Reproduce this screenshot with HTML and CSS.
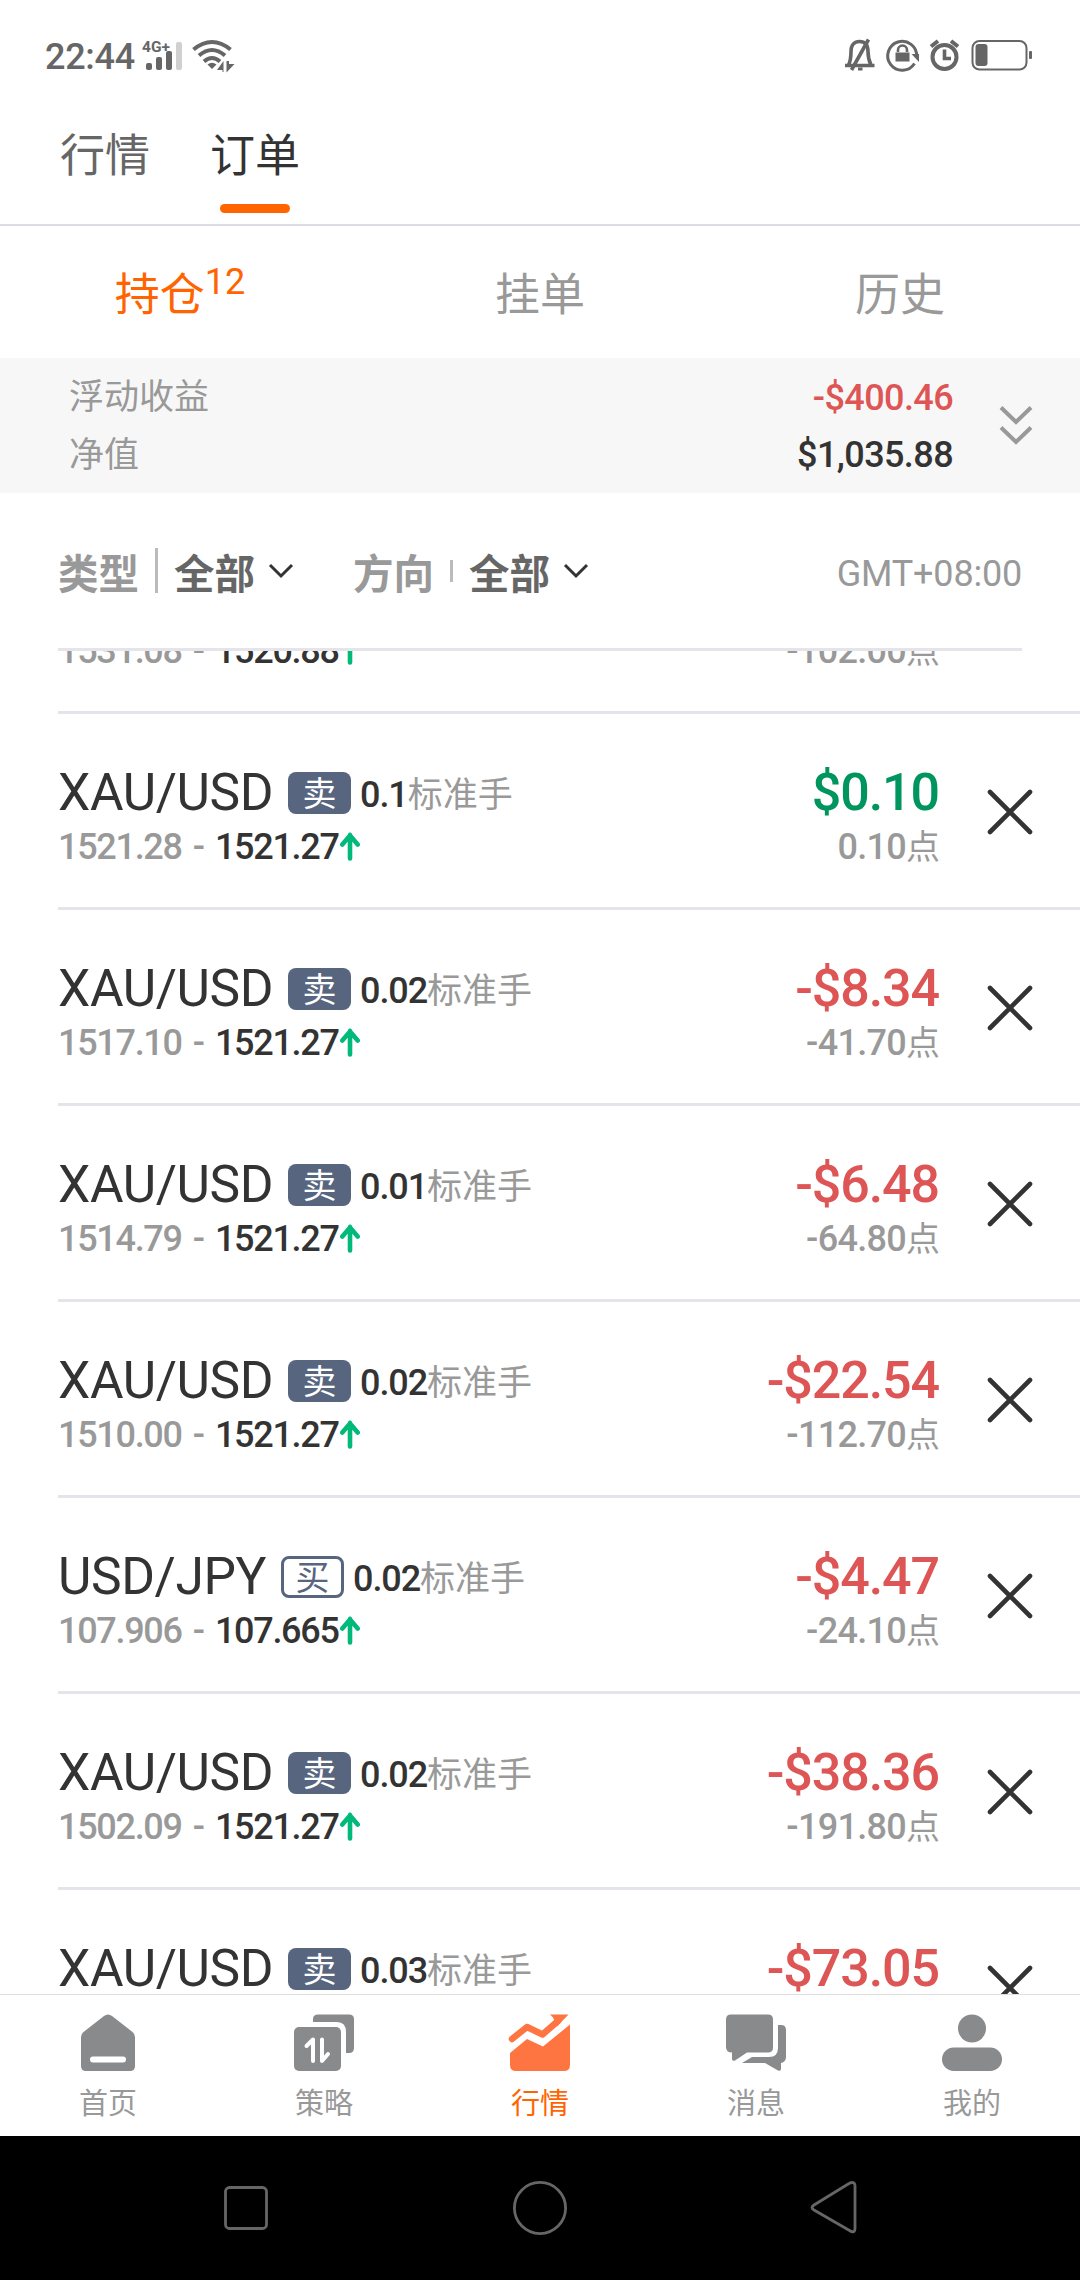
FILE: index.html
```html
<!DOCTYPE html>
<html lang="zh-CN">
<head>
<meta charset="utf-8">
<title>订单</title>
<link rel="stylesheet" href="styles.css">
</head>
<body>
<svg class="defs" width="0" height="0">
  <symbol id="up" viewBox="0 0 20 30"><path d="M10 27.500V4M2.300 13.500L10 4.500L17.700 13.500" fill="none" stroke="#00b97a" stroke-width="4.600" stroke-linecap="round" stroke-linejoin="miter"/></symbol>
  <symbol id="close" viewBox="0 0 46 46"><path d="M3 3L43 43M43 3L3 43" fill="none" stroke="#333" stroke-width="4.600" stroke-linecap="round"/></symbol>
  <symbol id="down" viewBox="0 0 26 16"><path d="M2 2L13 13L24 2" fill="none" stroke="#333" stroke-width="3"/></symbol>
</svg>
<div class="phone">
  <header class="status">
    <span class="clock">22:44</span>
    <svg class="signal" width="42" height="34" viewBox="0 0 42 34">
      <text x="0" y="13" class="net">4G+</text>
      <rect x="4" y="24" width="6" height="7" rx="2" fill="#666"/>
      <rect x="14" y="18" width="6" height="13" rx="2" fill="#666"/>
      <rect x="24" y="12" width="6" height="19" rx="2" fill="#666"/>
      <rect x="34" y="3" width="6" height="28" rx="2" fill="#d0d0d0"/>
    </svg>
    <svg class="wifi" width="44" height="34" viewBox="0 0 44 34">
      <g fill="none" stroke="#666" stroke-width="4">
        <path d="M1.500 10.500Q20 -4.500 38.500 10.500"/>
        <path d="M7 16.500Q20 5.500 33 16.500"/>
        <path d="M12 22.500Q20 15.500 28 22.500"/>
      </g>
      <path d="M15.500 25.500Q20 22 24.500 25.500L20 30Z" fill="#666"/>
      <path d="M25 31L31.500 22V33H30.500V31H25ZM34.500 22V33.500L42.500 25H37V22Z" fill="#666"/>
    </svg>
    <svg class="sysicons" width="188" height="38" viewBox="0 0 188 38">
      <g fill="none" stroke="#666">
        <path d="M1 29.500H30.500M4.500 29C7 24 7 21 7 15.500C7 8.500 10.500 5.500 15.500 5.500S24 8.500 24 15.500C24 21 24.500 24 27 29" stroke-width="3.600"/>
        <path d="M7.500 34L24.500 3.500" stroke-width="3.600"/>
        <path d="M14 33H18.500" stroke-width="3"/>
        <path d="M72.700 20.500A14.500 14.500 0 1 0 70.500 27.500" stroke-width="3"/>
        <path d="M54 16V14A4.500 4.500 0 0 1 63 14V16" stroke-width="2.600"/>
        <circle cx="100.500" cy="21" r="12" stroke-width="4"/>
        <path d="M87 10.500L94 5M107 5L114 10.500" stroke-width="4"/>
        <path d="M100.500 13.500V22.500H107" stroke-width="3.600"/>
        <rect x="128.500" y="5" width="54" height="28.500" rx="7" stroke-width="2"/>
      </g>
      <path d="M51.500 16.500H65.500V25.500H51.500ZM67.500 18H75V26Z" fill="#666"/>
      <rect x="131.500" y="8" width="12" height="22" rx="3" fill="#666"/>
      <rect x="185" y="15" width="3" height="8" rx="1" fill="#666"/>
    </svg>
  </header>

  <nav class="tabs">
    <span class="tab">行情</span>
    <span class="tab tab-on">订单</span>
  </nav>

  <nav class="subtabs">
    <span class="subtab subtab-on">持仓<span class="count">12</span></span>
    <span class="subtab">挂单</span>
    <span class="subtab">历史</span>
  </nav>

  <section class="summary">
    <div class="labels"><span>浮动收益</span><span>净值</span></div>
    <div class="values"><span class="red">-$400.46</span><span>$1,035.88</span></div>
    <svg class="more" width="34" height="40" viewBox="0 0 34 40"><path d="M2 2.500L17 17L32 2.500M2 22.500L17 37L32 22.500" fill="none" stroke="#999" stroke-width="4"/></svg>
  </section>

  <section class="filters">
    <span class="fname">类型</span><i class="bar bar-tall"></i><span class="fvalue">全部</span><svg class="caret" width="26" height="16"><use href="#down"/></svg>
    <span class="fname fname-2">方向</span><i class="bar"></i><span class="fvalue">全部</span><svg class="caret" width="26" height="16"><use href="#down"/></svg>
    <span class="zone">GMT+08:00</span>
  </section>

  <main class="list">
    <article class="row row-first">
      <div class="info"><div class="price"><span>1531.08 - </span><b>1520.88</b><svg class="up" width="20" height="30"><use href="#up"/></svg></div></div>
      <div class="profit"><span class="pts">-102.00<em>点</em></span></div>
    </article>
    <article class="row">
      <div class="info"><div class="head"><span class="pair">XAU/USD</span><span class="side">卖</span><span class="lot"><b>0.1</b>标准手</span></div>
      <div class="price"><span>1521.28 - </span><b>1521.27</b><svg class="up" width="20" height="30"><use href="#up"/></svg></div></div>
      <div class="profit"><span class="sum green">$0.10</span><span class="pts">0.10<em>点</em></span></div>
      <svg class="close" width="46" height="46"><use href="#close"/></svg>
    </article>
    <article class="row">
      <div class="info"><div class="head"><span class="pair">XAU/USD</span><span class="side">卖</span><span class="lot"><b>0.02</b>标准手</span></div>
      <div class="price"><span>1517.10 - </span><b>1521.27</b><svg class="up" width="20" height="30"><use href="#up"/></svg></div></div>
      <div class="profit"><span class="sum red">-$8.34</span><span class="pts">-41.70<em>点</em></span></div>
      <svg class="close" width="46" height="46"><use href="#close"/></svg>
    </article>
    <article class="row">
      <div class="info"><div class="head"><span class="pair">XAU/USD</span><span class="side">卖</span><span class="lot"><b>0.01</b>标准手</span></div>
      <div class="price"><span>1514.79 - </span><b>1521.27</b><svg class="up" width="20" height="30"><use href="#up"/></svg></div></div>
      <div class="profit"><span class="sum red">-$6.48</span><span class="pts">-64.80<em>点</em></span></div>
      <svg class="close" width="46" height="46"><use href="#close"/></svg>
    </article>
    <article class="row">
      <div class="info"><div class="head"><span class="pair">XAU/USD</span><span class="side">卖</span><span class="lot"><b>0.02</b>标准手</span></div>
      <div class="price"><span>1510.00 - </span><b>1521.27</b><svg class="up" width="20" height="30"><use href="#up"/></svg></div></div>
      <div class="profit"><span class="sum red">-$22.54</span><span class="pts">-112.70<em>点</em></span></div>
      <svg class="close" width="46" height="46"><use href="#close"/></svg>
    </article>
    <article class="row">
      <div class="info"><div class="head"><span class="pair">USD/JPY</span><span class="side side-buy">买</span><span class="lot"><b>0.02</b>标准手</span></div>
      <div class="price"><span>107.906 - </span><b>107.665</b><svg class="up" width="20" height="30"><use href="#up"/></svg></div></div>
      <div class="profit"><span class="sum red">-$4.47</span><span class="pts">-24.10<em>点</em></span></div>
      <svg class="close" width="46" height="46"><use href="#close"/></svg>
    </article>
    <article class="row">
      <div class="info"><div class="head"><span class="pair">XAU/USD</span><span class="side">卖</span><span class="lot"><b>0.02</b>标准手</span></div>
      <div class="price"><span>1502.09 - </span><b>1521.27</b><svg class="up" width="20" height="30"><use href="#up"/></svg></div></div>
      <div class="profit"><span class="sum red">-$38.36</span><span class="pts">-191.80<em>点</em></span></div>
      <svg class="close" width="46" height="46"><use href="#close"/></svg>
    </article>
    <article class="row">
      <div class="info"><div class="head"><span class="pair">XAU/USD</span><span class="side">卖</span><span class="lot"><b>0.03</b>标准手</span></div></div>
      <div class="profit"><span class="sum red">-$73.05</span></div>
      <svg class="close" width="46" height="46"><use href="#close"/></svg>
    </article>
  </main>

  <nav class="dock">
    <a class="item"><svg width="62" height="58" viewBox="0 0 62 58"><path d="M4 23Q4 20 6.500 18L27 2Q31 -1 35 2L55.500 18Q58 20 58 23V52Q58 57 53 57H9Q4 57 4 52Z" fill="#898a8c"/><rect x="13" y="42.500" width="36" height="6" rx="3" fill="#fff"/></svg><span>首页</span></a>
    <a class="item"><svg width="62" height="58" viewBox="0 0 62 58"><path d="M20 8V5Q20 .5 25 .5H56Q61 .5 61 5V34Q61 39 56 39H53V18Q53 8 44 8Z" fill="#898a8c"/><rect x="1" y="13" width="47" height="44" rx="5" fill="#898a8c"/><path d="M13.500 32L20 25.500V47M29 25.500V47L35 40" fill="none" stroke="#fff" stroke-width="4" stroke-linecap="round" stroke-linejoin="round"/></svg><span>策略</span></a>
    <a class="item item-on"><svg width="62" height="58" viewBox="0 0 62 58"><path d="M1 39L18 25L34 32.500L61 10.500V51Q61 57 55 57H7Q1 57 1 51Z" fill="#ff7542"/><path d="M3 25L18 13L33.500 20.500L49 7" fill="none" stroke="#ff7542" stroke-width="6.500" stroke-linecap="round" stroke-linejoin="round"/><path d="M41 .5H59.500L48 12.500L44 3.500Z" fill="#ff7542"/></svg><span>行情</span></a>
    <a class="item"><svg width="62" height="58" viewBox="0 0 62 58"><path d="M6 .5H43Q48 .5 48 5.500V33.500Q48 38.500 43 38.500H22L10 46.500Q7 47.500 7 45V38.500Q1 38.500 1 33V5.500Q1 .5 6 .5Z" fill="#898a8c"/><path d="M53 11H56Q61 11 61 16V43Q61 48 56 49V55Q56 57.500 53 56.500L40 49H17L27 43H44Q53 43 53 34Z" fill="#898a8c"/></svg><span>消息</span></a>
    <a class="item"><svg width="62" height="58" viewBox="0 0 62 58"><circle cx="31" cy="14.500" r="14" fill="#898a8c"/><rect x="1" y="33.500" width="60" height="23.500" rx="11.750" fill="#898a8c"/></svg><span>我的</span></a>
  </nav>

  <footer class="system">
    <svg width="58" height="58" viewBox="0 0 58 58"><rect x="8.500" y="8.500" width="41" height="41" rx="4" fill="none" stroke="#666" stroke-width="2.800"/></svg>
    <svg width="58" height="58" viewBox="0 0 58 58"><circle cx="29" cy="29" r="25.600" fill="none" stroke="#666" stroke-width="2.800"/></svg>
    <svg width="58" height="58" viewBox="0 0 58 58"><path d="M9 26L44 4.500Q50 1.500 50 7.500V49Q50 55 44.500 51.500L9 31Q5 28.500 9 26Z" fill="none" stroke="#666" stroke-width="2.800"/></svg>
  </footer>
</div>
</body>
</html>
```
FILE: styles.css
```css
* { box-sizing: border-box; }
body {
  margin: 0;
  background: #fff;
  color: #333;
  font-family: Roboto, "Noto Sans CJK SC", sans-serif;
}
svg { display: block; flex: none; overflow: visible; }
.defs { position: absolute; }
.phone {
  width: 1080px;
  height: 2280px;
  display: flex;
  flex-direction: column;
  overflow: hidden;
  white-space: nowrap;
}

.status {
  height: 110px;
  flex: none;
  display: flex;
  align-items: center;
  padding: 0 48px 0 45px;
}
.clock {
  width: 97px;
  font-size: 36px;
  line-height: 44px;
  font-weight: 500;
  color: #666;
  letter-spacing: -0.300px;
  margin-top: 3px;
}
.signal { margin-top: 1px; }
.net { font: 700 15.500px Roboto, sans-serif; fill: #666; }
.wifi { margin: 2px 0 0 8px; }
.sysicons { margin-left: auto; }

.tabs {
  height: 116px;
  flex: none;
  display: flex;
  gap: 60px;
  padding: 17px 0 0 60px;
  border-bottom: 2px solid #dcdce4;
}
.tab {
  display: flex;
  flex-direction: column;
  align-items: center;
  font-size: 45px;
  line-height: 60px;
  color: #666;
}
.tab-on { color: #333; }
.tab-on::after {
  content: "";
  width: 70px;
  height: 9px;
  margin-top: 17px;
  border-radius: 5px;
  background: #ff6400;
}

.subtabs {
  height: 132px;
  flex: none;
  display: grid;
  grid-template-columns: repeat(3, 1fr);
  align-items: center;
  padding-top: 7px;
}
.subtab {
  display: flex;
  justify-content: center;
  font-size: 45px;
  line-height: 60px;
  color: #999;
}
.subtab-on { color: #ff6400; }
.count { font-size: 36px; line-height: 40px; margin-top: -4px; }

.summary {
  height: 135px;
  flex: none;
  display: flex;
  align-items: center;
  padding: 2px 47px 0 69px;
  background: #f7f7f7;
  font-size: 35px;
}
.labels, .values { display: flex; flex-direction: column; line-height: 58px; }
.labels { color: #999; }
.values {
  margin-left: auto;
  text-align: right;
  font-size: 36px;
  font-weight: 500;
  letter-spacing: -0.600px;
  line-height: 57px;
}
.more { margin: -4px 0 0 46px; }
.red { color: #dd5555; }
.green { color: #00955f; }

.filters {
  height: 158px;
  flex: none;
  display: flex;
  align-items: center;
  margin: 0 58px;
  padding-top: 2px;
  border-bottom: 3px solid #e4e4ea;
  font-size: 40.500px;
  font-weight: 700;
}
.fname { color: #999; }
.fname-2 { margin-left: 59px; }
.fvalue { color: #666; }
.bar { width: 3px; height: 22px; margin: -2px 16px 0 16px; background: #bbb; }
.bar-tall { height: 45px; }
.caret { margin: -2px 0 0 13px; }
.zone { margin: 5px 0 0 auto; font-size: 36px; font-weight: 400; letter-spacing: -0.200px; color: #999; }

.list { flex: 1; overflow: hidden; min-height: 0; }
.row {
  height: 196px;
  display: flex;
  margin-left: 58px;
  padding: 48px 47px 0 0;
  border-bottom: 3px solid #e4e4ea;
}
.row-first { height: 85px; margin-top: -22px; padding: 0 140px 0 0; }
.head { display: flex; align-items: flex-start; height: 63px; }
.pair { margin-top: 1px; font-size: 51.500px; line-height: 60px; letter-spacing: -0.400px; }
.side {
  width: 63px;
  height: 42px;
  margin: 10px 9px 0 15px;
  border-radius: 8px;
  background: #57657f;
  color: #fff;
  font-size: 34px;
  line-height: 44px;
  text-align: center;
}
.side-buy { background: #fff; border: 3px solid #57657f; color: #57657f; line-height: 38px; }
.lot { margin-top: 11px; font-size: 35px; line-height: 44px; color: #999; }
.lot b, .price { font-size: 36px; font-weight: 500; letter-spacing: -1.300px; }
.lot b { letter-spacing: -1.100px; }
.lot b, .price b { color: #333; font-weight: 500; }
.price { display: flex; line-height: 44px; color: #999; white-space: pre; word-spacing: 3.500px; }
.up { margin: 6px 0 0 1px; }
.profit { margin-left: auto; display: flex; flex-direction: column; text-align: right; }
.sum { margin: 1px 1px 0 0; font-size: 52px; line-height: 60px; height: 62px; font-weight: 500; letter-spacing: -1.100px; }
.pts { font-size: 36px; line-height: 44px; font-weight: 500; letter-spacing: -0.700px; color: #999; }
.pts em { font-style: normal; font-weight: 400; font-size: 34px; letter-spacing: 0; }
.close { margin: 27px 0 0 47px; }

.dock {
  height: 142px;
  flex: none;
  display: grid;
  grid-template-columns: repeat(5, 1fr);
  border-top: 1px solid #e0e0e0;
}
.item {
  display: flex;
  flex-direction: column;
  align-items: center;
  gap: 12px;
  padding-top: 19px;
  font-size: 29px;
  line-height: 40px;
  color: #999;
}
.item-on { color: #ff6400; }

.system {
  height: 144px;
  flex: none;
  display: flex;
  justify-content: center;
  gap: 236px;
  padding-top: 43px;
  background: #000;
}
```
